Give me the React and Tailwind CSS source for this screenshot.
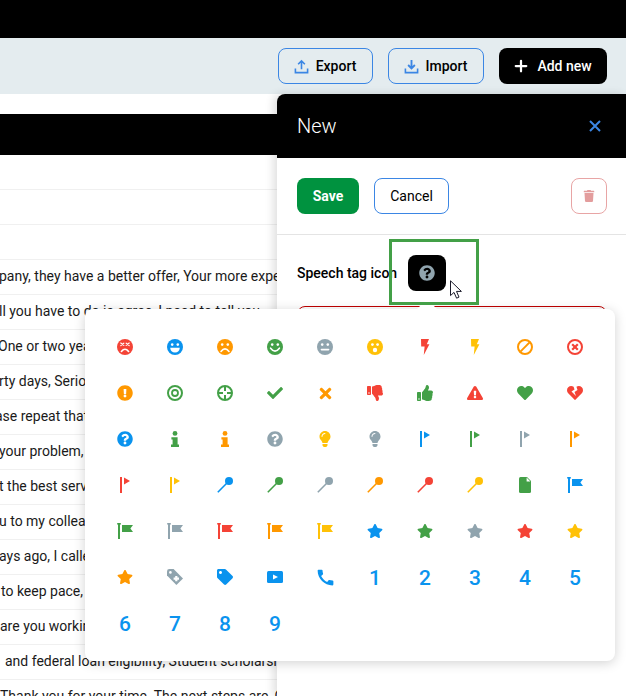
import React from 'react';
import { Plus } from 'lucide-react';
import {
    FaQuestionCircle, FaExclamationCircle, FaThumbsUp, FaThumbsDown, FaHeart, FaHeartBroken,
    FaLightbulb, FaStar, FaTag, FaTrash, FaCheck, FaExclamationTriangle, FaTimes,
} from 'react-icons/fa';
import { MdCall } from 'react-icons/md';

const RED = '#f44336';
const BLUE = '#0a93ee';
const ORANGE = '#ff9800';
const GREEN = '#43a047';
const GREY = '#90a4ae';
const YELLOW = '#ffc107';

const Box = ({ children }) => (
    <svg viewBox="0 0 16 16" className="w-4 h-4 block">{children}</svg>
);

const Face = ({ c, children }) => (
    <Box>
        <circle cx="8" cy="8" r="8" fill={c} />
        <g stroke="#fff" fill="none" strokeWidth="1.6" strokeLinecap="round">{children}</g>
    </Box>
);

const Eyes = () => (
    <>
        <circle cx="5.2" cy="5.6" r="1.3" fill="#fff" stroke="none" />
        <circle cx="10.8" cy="5.6" r="1.3" fill="#fff" stroke="none" />
    </>
);

const Ring = ({ c, children }) => (
    <Box>
        <circle cx="8" cy="8" r="7" fill="none" stroke={c} strokeWidth="2" />
        {children}
    </Box>
);

const SmallFlag = ({ c }) => (
    <Box>
        <rect x="3" y="0" width="2" height="16" fill={c} />
        <path d="M7 0.5 L13 4 L7 7.5 Z" fill={c} />
    </Box>
);

const BigFlag = ({ c }) => (
    <Box>
        <rect x="0.2" y="0" width="3.6" height="1.6" fill={c} />
        <rect x="1" y="0" width="2" height="16" fill={c} />
        <path d="M5 2 H16 L13.4 5.5 L16 9 H5 Z" fill={c} />
    </Box>
);

const Pin = ({ c }) => (
    <Box>
        <circle cx="12" cy="4" r="4" fill={c} />
        <path d="M10 6 L0.8 15.2" stroke={c} strokeWidth="1.6" />
    </Box>
);

const Bolt = ({ c }) => (
    <Box>
        <path d="M4 0 H12 L9.8 5.2 H12.4 L6.8 16 L7.6 7.6 H4.2 Z" fill={c} />
    </Box>
);

const Info = ({ c }) => (
    <Box>
        <circle cx="8" cy="2.4" r="2.4" fill={c} />
        <path d="M4.4 6.2 H10.6 V13.4 H12 V16 H4 V13.4 H5.6 V8.6 H4.4 Z" fill={c} />
    </Box>
);

const Num = ({ n }) => (
    <span className="mt-[2px] text-[21px] leading-none font-medium text-[#0a93ee]">{n}</span>
);

// one entry per cell, left to right
const ICONS = [
    <Face c={RED}><path d="M3.8 4 L6.8 6.4 M12.2 4 L9.2 6.4 M3.8 6.6 L6.8 4.2 M12.2 6.6 L9.2 4.2" strokeWidth="1.2" /><path d="M4.4 12.4 Q8 8 11.6 12.4" /></Face>,
    <Face c={BLUE}><Eyes /><path d="M3.2 8.8 H12.8 Q12.4 13.6 8 13.6 Q3.6 13.6 3.2 8.8 Z" fill="#fff" stroke="none" /></Face>,
    <Face c={ORANGE}><Eyes /><path d="M4 12.4 Q8 7.4 12 12.4" /></Face>,
    <Face c={GREEN}><Eyes /><path d="M3.6 9.2 Q8 15 12.4 9.2" /></Face>,
    <Face c={GREY}><Eyes /><path d="M4.4 10.6 H11.6" /></Face>,
    <Face c={YELLOW}><circle cx="5.4" cy="5.6" r="1.4" fill="#fff" stroke="none" /><circle cx="10.6" cy="5.6" r="1.4" fill="#fff" stroke="none" /><circle cx="8" cy="11" r="2.2" fill="#fff" stroke="none" /></Face>,
    <Bolt c={RED} />,
    <Bolt c={YELLOW} />,
    <Box><circle cx="8" cy="8" r="7" fill="none" stroke={ORANGE} strokeWidth="2" /><path d="M3.4 12.6 L12.6 3.4" stroke={ORANGE} strokeWidth="2" /></Box>,
    <Ring c={RED}><path d="M5.2 5.2 L10.8 10.8 M10.8 5.2 L5.2 10.8" stroke={RED} strokeWidth="2.2" /></Ring>,

    <FaExclamationCircle size={16} color={ORANGE} />,
    <Ring c={GREEN}><circle cx="8" cy="8" r="3" fill="none" stroke={GREEN} strokeWidth="1.8" /></Ring>,
    <Ring c={GREEN}><path d="M8 2 V6 M8 10 V14 M2 8 H6 M10 8 H14" stroke={GREEN} strokeWidth="2" /></Ring>,
    <FaCheck size={16} color={GREEN} />,
    <FaTimes size={17} color={ORANGE} />,
    <FaThumbsDown size={16} color={RED} />,
    <FaThumbsUp size={16} color={GREEN} />,
    <FaExclamationTriangle size={16} color={RED} />,
    <FaHeart size={16} color={GREEN} />,
    <FaHeartBroken size={16} color={RED} />,

    <FaQuestionCircle size={16} color={BLUE} />,
    <Info c={GREEN} />,
    <Info c={ORANGE} />,
    <FaQuestionCircle size={16} color={GREY} />,
    <FaLightbulb size={16} color={YELLOW} />,
    <FaLightbulb size={16} color={GREY} />,
    <SmallFlag c={BLUE} />,
    <SmallFlag c={GREEN} />,
    <SmallFlag c={GREY} />,
    <SmallFlag c={ORANGE} />,

    <SmallFlag c={RED} />,
    <SmallFlag c={YELLOW} />,
    <Pin c={BLUE} />,
    <Pin c={GREEN} />,
    <Pin c={GREY} />,
    <Pin c={ORANGE} />,
    <Pin c={RED} />,
    <Pin c={YELLOW} />,
    <Box><path d="M3.5 0 H10 L14 4 V14.5 Q14 16 12.5 16 H3.5 Q2 16 2 14.5 V1.5 Q2 0 3.5 0 Z" fill={GREEN} /><path d="M9.6 0.6 V4.4 H13.4 Z" fill="#fff" /></Box>,
    <BigFlag c={BLUE} />,

    <BigFlag c={GREEN} />,
    <BigFlag c={GREY} />,
    <BigFlag c={RED} />,
    <BigFlag c={ORANGE} />,
    <BigFlag c={YELLOW} />,
    <FaStar size={16} color={BLUE} />,
    <FaStar size={16} color={GREEN} />,
    <FaStar size={16} color={GREY} />,
    <FaStar size={16} color={RED} />,
    <FaStar size={16} color={YELLOW} />,

    <FaStar size={16} color={ORANGE} />,
    <Box>
        <path d="M0 2.4 Q0 0 2.4 0 H6.6 L16 9.4 L9.4 16 L0 6.6 Z" fill={GREY} />
        <circle cx="3.4" cy="3.4" r="1.3" fill="#fff" />
        <path d="M6.6 9.6 H12 M9.3 6.9 V12.3" stroke="#fff" strokeWidth="2.2" />
    </Box>,
    <FaTag size={16} color={BLUE} />,
    <Box><rect x="0" y="2" width="16" height="12" rx="1.5" fill={BLUE} /><path d="M6 5.4 L11 8 L6 10.6 Z" fill="#fff" /></Box>,
    <MdCall size={21} color={BLUE} />,
    <Num n="1" />,
    <Num n="2" />,
    <Num n="3" />,
    <Num n="4" />,
    <Num n="5" />,

    <Num n="6" />,
    <Num n="7" />,
    <Num n="8" />,
    <Num n="9" />,
];

const ROWS = [
    { text: '' },
    { text: '' },
    { text: '' },
    { text: 'pany, they have a better offer, Your more expertise in this field', shift: '-ml-px' },
    { text: 'll you have to do is agree, I need to tell you', shift: '-ml-px' },
    { text: 'One or two years of experience in this field', shift: '-ml-[2px]' },
    { text: 'rty days, Serious about this one', shift: '-ml-px' },
    { text: 'ase repeat that for me please', shift: '-ml-[5px]' },
    { text: 'your problem, we can help', shift: '-ml-px' },
    { text: 't the best service for you', shift: '-ml-px' },
    { text: 'u to my colleague for this', shift: '-ml-px' },
    { text: 'ays ago, I called you about it', shift: '-ml-px' },
    { text: 'to keep pace, we need to go', shift: 'ml-px' },
    { text: 'are you working on this today' },
    { text: 'and federal loan eligibility, Student scholarship', shift: 'ml-[5px]' },
    { text: 'Thank you for your time. The next steps are, Call' },
];

const ExportIcon = () => (
    <svg viewBox="0 0 16 16" className="w-[15px] h-[15px]" fill="none" stroke="#3b86e4" strokeWidth="1.7">
        <path d="M8 11 V2 M4.4 5.6 L8 2 L11.6 5.6" />
        <path d="M1.5 10 V14.5 H14.5 V10" />
    </svg>
);

const ImportIcon = () => (
    <svg viewBox="0 0 16 16" className="w-[15px] h-[15px]" fill="none" stroke="#3b86e4" strokeWidth="1.7">
        <path d="M8 1 V10 M4.4 6.4 L8 10 L11.6 6.4" strokeWidth="2" />
        <path d="M1.5 10 V14.5 H14.5 V10" />
    </svg>
);

const App = () => {
    return (
        <div className="relative w-[626px] h-[696px] overflow-hidden bg-white font-['Roboto',sans-serif] text-sm text-[#1a1a1a]">
            <div className="h-[38px] bg-black"></div>

            {/* toolbar */}
            <div className="h-[56px] bg-[#e4ecef] flex items-center justify-end gap-[15px] pr-[19px]">
                <button className="h-9 w-[95px] flex items-center justify-center gap-[7px] pr-px border border-[#3b86e4] rounded-lg font-medium text-black">
                    <ExportIcon /> Export
                </button>
                <button className="h-9 w-[96px] flex items-center justify-center gap-[7px] pr-px border border-[#3b86e4] rounded-lg font-medium text-black">
                    <ImportIcon /> Import
                </button>
                <button className="h-9 w-[108px] flex items-center justify-center gap-[7px] pr-[2px] bg-black rounded-lg font-medium text-white">
                    <Plus className="w-[18px] h-[18px]" strokeWidth={3} /> Add new
                </button>
            </div>

            {/* table behind the drawer */}
            <div className="pt-5">
                <div className="h-[41px] bg-black"></div>
                {ROWS.map((row, i) => (
                    <div key={i} className="h-[35px] pb-[3px] border-b border-[#f0f0f0] flex items-center overflow-hidden whitespace-pre">
                        <span className={row.shift}>{row.text}</span>
                    </div>
                ))}
            </div>

            {/* drawer */}
            <div className="absolute left-[277px] right-0 top-[94px] bottom-0 bg-white shadow-[-4px_0_8px_rgba(0,0,0,0.12)] rounded-tl-lg">
                <div className="h-16 bg-black rounded-tl-lg flex items-center justify-between pl-5 pr-[25px] text-white">
                    <span className="text-[20px] font-light">New</span>
                    <svg viewBox="0 0 12 12" className="w-3 h-3" stroke="#3b86e4" strokeWidth="2">
                        <path d="M1 1 L11 11 M11 1 L1 11" />
                    </svg>
                </div>
                <div className="h-[77px] border-b border-[#e4e4e4] pl-5 pr-[19px] pt-5 flex items-start">
                    <button className="h-9 w-[62px] bg-[#00923f] rounded-lg text-white font-bold">Save</button>
                    <button className="h-9 w-[75px] ml-[15px] border border-[#3b86e4] rounded-lg text-black">Cancel</button>
                    <button className="h-9 w-9 ml-auto border border-[#e8a5a5] rounded-lg flex items-center justify-center">
                        <FaTrash size={12} color="#e39d9d" />
                    </button>
                </div>
                <div className="pl-5 pr-[19px] pt-5">
                    <div className="flex items-center gap-[11px]">
                        <span className="font-medium text-black">Speech tag icon</span>
                        <div className="w-[38px] h-9 bg-black rounded-lg flex items-center justify-center">
                            <FaQuestionCircle size={16} color={GREY} />
                        </div>
                    </div>
                    <div className="mt-[15px] h-20 border border-[#c00000] rounded-lg"></div>
                </div>
            </div>

            {/* icon picker popover */}
            <div className="absolute left-[85px] top-[309px] w-[530px] bg-white rounded-lg shadow-[0_2px_12px_rgba(0,0,0,0.18)] p-[15px]">
                <div className="absolute left-[335px] -top-[7px] w-[14px] h-[14px] bg-white rotate-45"></div>
                <div className="relative grid grid-cols-10">
                    {ICONS.map((icon, i) => (
                        <div key={i} className="h-[46px] flex items-center justify-center">{icon}</div>
                    ))}
                </div>
            </div>

            {/* annotation on top of the screenshot */}
            <div className="absolute left-[389px] top-[239px] w-[90px] h-[66px] border-[3px] border-[#43a047]"></div>
            <svg viewBox="0 0 13 19" className="absolute left-[450px] top-[280px] w-[13px] h-[19px]">
                <path d="M0.5 0.8 V15.6 L4 12.4 L6.6 18.2 L9 17.1 L6.5 11.4 H11.4 Z" fill="#fff" stroke="#1a1a2a" strokeWidth="1" />
            </svg>
        </div>
    );
};

export default App;
